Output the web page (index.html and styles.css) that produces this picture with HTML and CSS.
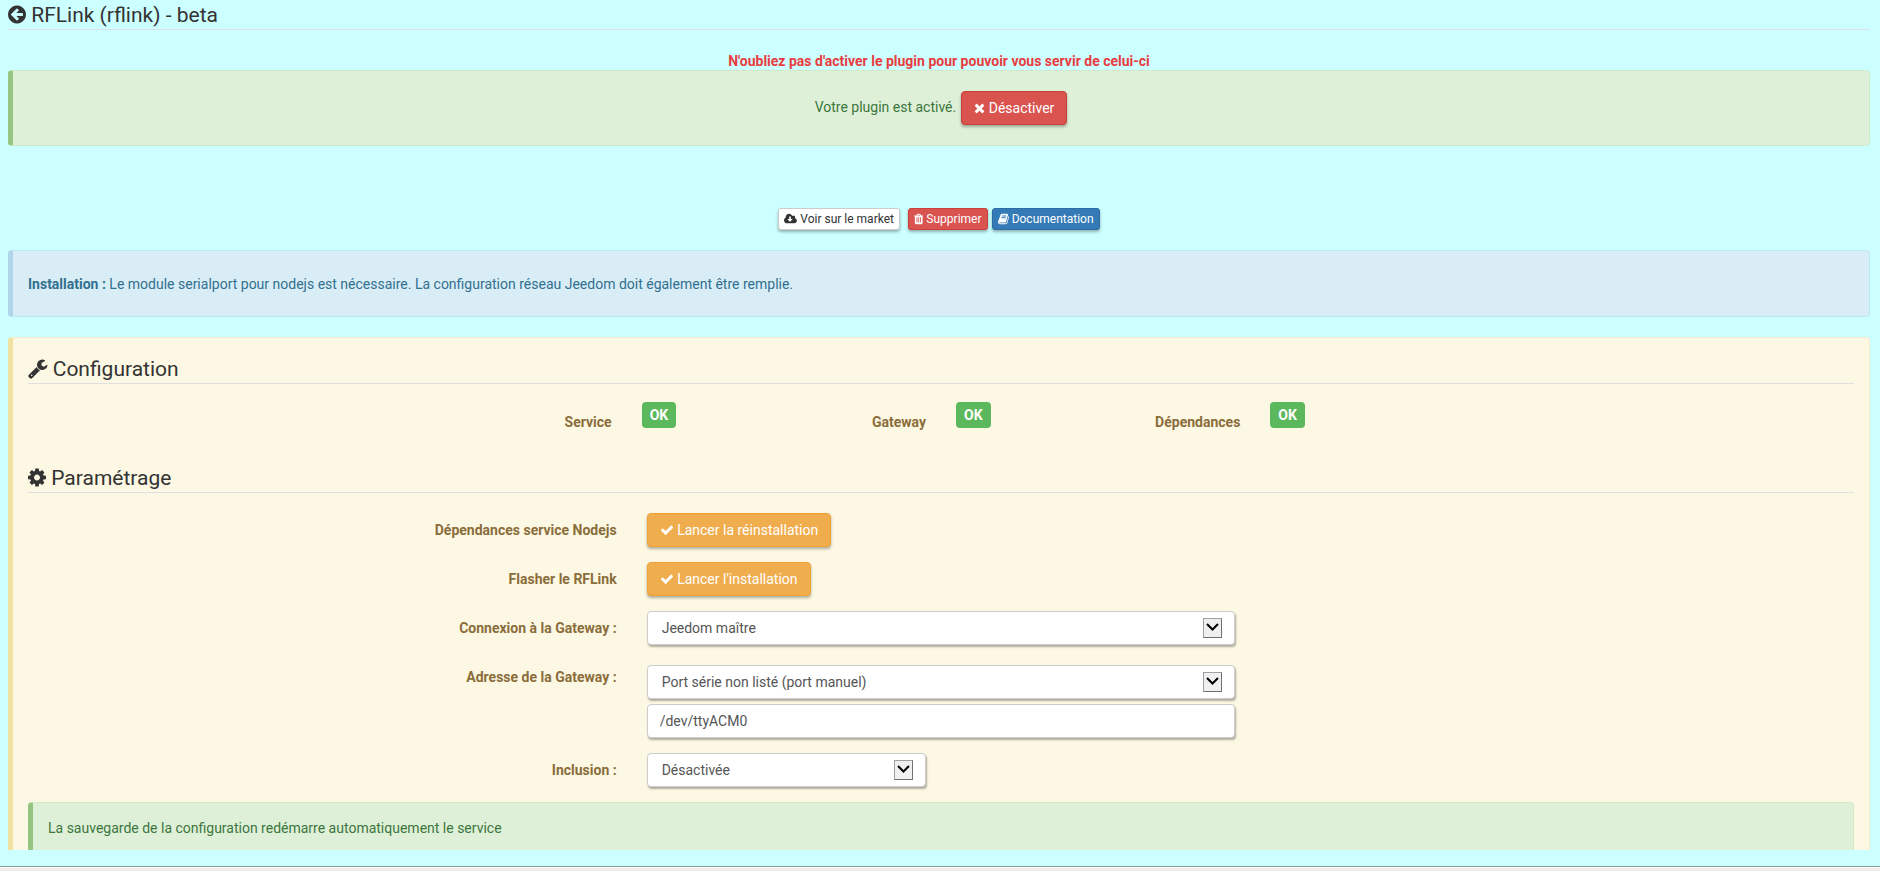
FILE: index.html
```html
<!DOCTYPE html>
<html lang="fr">
<head>
<meta charset="utf-8">
<title>RFLink (rflink) - beta</title>
<link rel="stylesheet" href="styles.css">
</head>
<body>
<main class="page">
  <h1 class="legend"><svg class="icon icon-lg" viewBox="128 0 1536 1792" aria-hidden="true"><path d="M1408 960v-128q0-26-19-45t-45-19h-502l189-189q19-19 19-45t-19-45l-91-91q-18-18-45-18t-45 18l-362 362-91 91q-18 18-18 45t18 45l91 91 362 362q18 18 45 18t45-18l91-91q18-18 18-45t-18-45l-189-189h502q26 0 45-19t19-45zm256-64q0 209-103 385.5t-279.5 279.5-385.5 103-385.5-103-279.5-279.5-103-385.5 103-385.5 279.5-279.5 385.5-103 385.5 103 279.5 279.5 103 385.5z"/></svg> RFLink (rflink) - beta</h1>

  <p class="reminder">N'oubliez pas d'activer le plugin pour pouvoir vous servir de celui-ci</p>
  <div class="alert alert-success alert-state">
    <span class="state-text">Votre plugin est activé.</span>
    <button type="button" class="btn btn-danger"><svg class="icon" viewBox="192 0 1408 1792" aria-hidden="true"><path d="M1490 1322q0 40-28 68l-136 136q-28 28-68 28t-68-28l-294-294-294 294q-28 28-68 28t-68-28l-136-136q-28-28-28-68t28-68l294-294-294-294q-28-28-28-68t28-68l136-136q28-28 68-28t68 28l294 294 294-294q28-28 68-28t68 28l136 136q28 28 28 68t-28 68l-294 294 294 294q28 28 28 68z"/></svg> Désactiver</button>
  </div>

  <nav class="actions">
    <a href="#market" class="btn btn-xs btn-default"><svg class="icon icon-sm" viewBox="-64 0 1920 1792" aria-hidden="true"><path d="M1216 928q0-14-9-23t-23-9h-224v-352q0-13-9.5-22.5t-22.5-9.5h-192q-13 0-22.5 9.5t-9.5 22.5v352h-224q-13 0-22.5 9.5t-9.5 22.5q0 14 9 23l352 352q9 9 23 9t23-9l351-351q10-12 10-24zm640 224q0 159-112.5 271.5t-271.5 112.5h-1088q-185 0-316.5-131.5t-131.5-316.5q0-130 70-240t188-165q-2-30-2-43 0-212 150-362t362-150q156 0 285.5 87t188.5 231q71-62 166-62 106 0 181 75t75 181q0 76-41 138 130 31 213.5 135.5t83.5 238.5z"/></svg> Voir sur le market</a>
    <span class="actions-pair">
      <button type="button" class="btn btn-xs btn-danger"><svg class="icon icon-sm" viewBox="192 0 1408 1792" aria-hidden="true"><path d="M704 1376v-704q0-14-9-23t-23-9h-64q-14 0-23 9t-9 23v704q0 14 9 23t23 9h64q14 0 23-9t9-23zm256 0v-704q0-14-9-23t-23-9h-64q-14 0-23 9t-9 23v704q0 14 9 23t23 9h64q14 0 23-9t9-23zm256 0v-704q0-14-9-23t-23-9h-64q-14 0-23 9t-9 23v704q0 14 9 23t23 9h64q14 0 23-9t9-23zm-544-992h448l-48-117q-7-9-17-11h-317q-10 2-17 11zm928 32v64q0 14-9 23t-23 9h-96v948q0 83-47 143.5t-113 60.5h-832q-66 0-113-58.5t-47-141.5v-952h-96q-14 0-23-9t-9-23v-64q0-14 9-23t23-9h309l70-167q15-37 54-63t79-26h320q40 0 79 26t54 63l70 167h309q14 0 23 9t9 23z"/></svg> Supprimer</button>
      <a href="#documentation" class="btn btn-xs btn-primary"><svg class="icon icon-sm" viewBox="64 0 1664 1792" aria-hidden="true"><path d="M1703 478q40 57 18 129l-275 906q-19 64-76.5 107.5t-122.5 43.5h-923q-77 0-148.5-53.5t-99.5-131.5q-24-67-2-127 0-4 3-27t4-37q1-8-3-21.5t-3-19.5q2-11 8-21t16.5-23.5 16.5-23.5q23-38 45-91.5t30-91.5q3-10 .5-30t-.5-28q3-11 17-28t17-23q21-36 42-92t25-90q1-9-2.5-32t.5-28q4-13 22-30.5t22-22.5q19-26 42.5-84.5t27.5-96.5q1-8-3-25.5t-2-26.5q2-8 9-18t18-23 17-21q8-12 16.5-30.5t15-35 16-36 19.5-32 26.5-23.5 36-11.5 47.5 5.5l-1 3q38-9 51-9h761q74 0 114 56t18 130l-274 906q-36 119-71.5 153.5t-128.5 34.5h-869q-27 0-38 15-11 16-1 43 24 70 144 70h923q29 0 56-15.5t35-41.5l300-987q7-22 5-57 38 15 59 43zm-1064 2q-4 13 2 22.5t20 9.5h608q13 0 25.5-9.5t16.5-22.5l21-64q4-13-2-22.5t-20-9.5h-608q-13 0-25.5 9.5t-16.5 22.5zm-83 256q-4 13 2 22.5t20 9.5h608q13 0 25.5-9.5t16.5-22.5l21-64q4-13-2-22.5t-20-9.5h-608q-13 0-25.5 9.5t-16.5 22.5z"/></svg> Documentation</a>
    </span>
  </nav>

  <div class="alert alert-info"><strong>Installation :</strong> Le module serialport pour nodejs est nécessaire. La configuration réseau Jeedom doit également être remplie.</div>

  <section class="alert panel">
    <h2 class="legend"><svg class="icon icon-lg" viewBox="64 0 1664 1792" aria-hidden="true"><path d="M448 1472q0-26-19-45t-45-19-45 19-19 45 19 45 45 19 45-19 19-45zm644-420l-682 682q-37 37-90 37-52 0-91-37l-106-108q-38-36-38-90 0-53 38-91l681-681q39 98 114.5 173.5t173.5 114.5zm634-435q0 39-23 106-47 134-164.5 217.5t-258.5 83.5q-185 0-316.5-131.5t-131.5-316.5 131.5-316.5 316.5-131.5q58 0 121.5 16.5t107.5 46.5q16 11 16 28t-16 28l-293 169v224l193 107q5-3 79-48.5t135.5-81 70.5-35.5q15 0 23.5 10t8.5 25z"/></svg> Configuration</h2>
    <div class="status">
      <span class="status-name status-first">Service</span><span class="status-value"><span class="badge">OK</span></span>
      <span class="status-name">Gateway</span><span class="status-value"><span class="badge">OK</span></span>
      <span class="status-name">Dépendances</span><span class="status-value"><span class="badge">OK</span></span>
    </div>

    <h2 class="legend"><svg class="icon icon-lg" viewBox="128 0 1536 1792" aria-hidden="true"><path d="M1152 896q0-106-75-181t-181-75-181 75-75 181 75 181 181 75 181-75 75-181zm512-109v222q0 12-8 23t-20 13l-185 28q-19 54-39 91 35 50 107 138 10 12 10 25t-9 23q-27 37-99 108t-94 71q-12 0-26-9l-138-108q-44 23-91 38-16 136-29 186-7 28-36 28h-222q-14 0-24.5-8.5t-11.5-21.5l-28-184q-49-16-90-37l-141 107q-10 9-25 9-14 0-25-11-126-114-165-168-7-10-7-23 0-12 8-23 15-21 51-66.5t54-70.5q-27-50-41-99l-183-27q-13-2-21-12.5t-8-23.5v-222q0-12 8-23t19-13l186-28q14-46 39-92-40-57-107-138-10-12-10-24 0-10 9-23 26-36 98.5-107.5t94.5-71.5q13 0 26 10l138 107q44-23 91-38 16-136 29-186 7-28 36-28h222q14 0 24.5 8.5t11.5 21.5l28 184q49 16 90 37l142-107q9-9 24-9 13 0 25 10 129 119 165 170 7 8 7 22 0 12-8 23-15 21-51 66.5t-54 70.5q26 50 41 98l183 28q13 2 21 12.5t8 23.5z"/></svg> Paramétrage</h2>
    <form class="settings">
      <div class="row">
        <label class="row-label" for="reinstall">Dépendances service Nodejs</label>
        <div class="row-field"><button type="button" id="reinstall" class="btn btn-warning"><svg class="icon" viewBox="0 0 1792 1792" aria-hidden="true"><path d="M1671 566q0 40-28 68l-724 724-136 136q-28 28-68 28t-68-28l-136-136-362-362q-28-28-28-68t28-68l136-136q28-28 68-28t68 28l294 295 656-657q28-28 68-28t68 28l136 136q28 28 28 68z"/></svg> Lancer la réinstallation</button></div>
      </div>
      <div class="row">
        <label class="row-label" for="flash">Flasher le RFLink</label>
        <div class="row-field"><button type="button" id="flash" class="btn btn-warning"><svg class="icon" viewBox="0 0 1792 1792" aria-hidden="true"><path d="M1671 566q0 40-28 68l-724 724-136 136q-28 28-68 28t-68-28l-136-136-362-362q-28-28-28-68t28-68l136-136q28-28 68-28t68 28l294 295 656-657q28-28 68-28t68 28l136 136q28 28 28 68z"/></svg> Lancer l'installation</button></div>
      </div>
      <div class="row">
        <label class="row-label" for="connexion">Connexion à la Gateway :</label>
        <div class="row-field">
          <div class="select"><select id="connexion" class="control"><option>Jeedom maître</option></select><span class="select-arrow"><svg viewBox="0 0 17 18" aria-hidden="true"><path d="M3 5l5.500 5.500 5.500-5.500"/></svg></span></div>
        </div>
      </div>
      <div class="row">
        <label class="row-label" for="adresse">Adresse de la Gateway :</label>
        <div class="row-field row-stack">
          <div class="select"><select id="adresse" class="control"><option>Port série non listé (port manuel)</option></select><span class="select-arrow"><svg viewBox="0 0 17 18" aria-hidden="true"><path d="M3 5l5.500 5.500 5.500-5.500"/></svg></span></div>
          <input type="text" class="control" value="/dev/ttyACM0" aria-label="Port manuel">
        </div>
      </div>
      <div class="row">
        <label class="row-label" for="inclusion">Inclusion :</label>
        <div class="row-field row-short">
          <div class="select"><select id="inclusion" class="control"><option>Désactivée</option></select><span class="select-arrow"><svg viewBox="0 0 17 18" aria-hidden="true"><path d="M3 5l5.500 5.500 5.500-5.500"/></svg></span></div>
        </div>
      </div>
    </form>
    <div class="alert alert-success">La sauvegarde de la configuration redémarre automatiquement le service</div>
  </section>
</main>
<footer class="edge"></footer>
</body>
</html>
```
FILE: styles.css
```css
* {
  box-sizing: border-box;
}

body {
  display: flex;
  flex-direction: column;
  height: 100vh;
  margin: 0;
  overflow: hidden;
  background: #ccffff;
  color: #333;
  font: 14px/20px Roboto, "Liberation Sans", sans-serif;
}

.page {
  display: flex;
  flex: 1;
  flex-direction: column;
  min-height: 0;
  padding: 0 10px 16px 8px;
}

.page > * {
  flex-shrink: 0;
}

.edge {
  height: 5px;
  border-top: 1px solid #8c9696;
  background: #f0eeea;
  box-shadow: inset 0 1px #fff;
}

.legend {
  margin: 0 0 20px;
  padding-top: 2px;
  border-bottom: 1px solid #e0e0e4;
  font-size: 21px;
  font-weight: 400;
  line-height: 27px;
  color: #333;
}

.icon {
  height: 14px;
  vertical-align: -2px;
  fill: currentColor;
}

.icon-lg {
  height: 21px;
  vertical-align: -3px;
}

.icon-sm {
  height: 12px;
}

.reminder {
  margin: 0;
  padding-top: 2px;
  color: #e83c41;
  font-weight: 700;
  line-height: 18px;
  text-align: center;
}

.alert {
  padding: 15px;
  border: 1px solid;
  border-left-width: 5px;
  border-radius: 4px;
}

.alert-success {
  border-color: #d0e9c6;
  border-left-color: #96c581;
  background: #dff0d8;
  color: #3c763d;
}

.alert-state {
  display: flex;
  justify-content: center;
  gap: 5px;
  padding: 20px 15px;
}

.state-text {
  line-height: 32px;
}

.alert-info {
  padding: 23px 15px 22px;
  border-color: #bce8f1;
  border-left-color: #afd5ea;
  background: #d9edf7;
  color: #31708f;
}

.btn {
  display: inline-block;
  padding: 6px 12px;
  border: 1px solid;
  border-radius: 4px;
  box-shadow: 0 2px 3px rgba(0, 0, 0, 0.3);
  font: inherit;
  color: #fff;
  text-decoration: none;
  white-space: nowrap;
}

.btn-xs {
  padding: 1px 5px;
  border-radius: 3px;
  font-size: 12px;
  line-height: 18px;
}

.btn-default {
  border-color: #ccc;
  background: #fff;
  color: #333;
}

.btn-danger {
  border-color: #c9403c;
  background: #d9534f;
}

.btn-primary {
  border-color: #2e6da4;
  background: #337ab7;
}

.btn-warning {
  border-color: #eea236;
  background: #f0ad4e;
}

.actions {
  display: flex;
  justify-content: center;
  gap: 8px;
  margin: 62px 0 20px;
}

.actions-pair {
  display: flex;
  gap: 4px;
}

.page > .panel {
  flex: 1;
  min-height: 0;
  margin-top: 20px;
  border-color: #faebcc;
  border-left-color: #f0e2a3;
  border-bottom: 0;
  border-radius: 4px 4px 0 0;
  overflow: hidden;
  background: #fcf8e3;
  color: #8a6d3b;
}

.panel > .legend {
  margin-bottom: 18px;
  padding-top: 3px;
}

.status {
  display: grid;
  grid-template-columns: repeat(12, minmax(0, 1fr));
  min-height: 40px;
  margin: 0 -30px 20px;
}

.status-name {
  padding: 10px 15px 0;
  font-weight: 700;
  text-align: right;
}

.status-first {
  grid-column: 4;
}

.status-value {
  padding: 0 15px;
}

.badge {
  display: inline-block;
  padding: 3px 8px;
  border-radius: 4px;
  background: #5cb85c;
  color: #fff;
  font-weight: 700;
}

.settings {
  display: grid;
  gap: 15px;
  margin: 20px -15px 15px;
}

.row {
  display: grid;
  grid-template-columns: repeat(12, minmax(0, 1fr));
}

.row-label {
  grid-column: span 4;
  padding: 7px 15px 0;
  font-weight: 700;
  text-align: right;
}

.row-field {
  grid-column: span 4;
  padding: 0 15px;
}

.row-stack {
  display: grid;
  gap: 5px;
  padding-top: 5px;
}

.row-short {
  grid-column: span 2;
}

.control {
  display: block;
  width: 100%;
  height: 34px;
  padding: 6px 12px;
  border: 1px solid #ccc;
  border-radius: 4px;
  box-shadow: 1px 2px 2px rgba(0, 0, 0, 0.3);
  background: #fff;
  color: #555;
  font: inherit;
}

.select {
  position: relative;
}

.select .control {
  padding-left: 14px;
  appearance: none;
}

.select-arrow {
  position: absolute;
  top: 7px;
  right: 13px;
  width: 19px;
  height: 20px;
  border: 1px solid #707070;
  border-top-color: #a0a0a0;
  border-left-color: #a0a0a0;
  background: #f0f0f0;
  pointer-events: none;
}

.select-arrow svg {
  display: block;
  fill: none;
  stroke: #000;
  stroke-width: 2;
}
```
